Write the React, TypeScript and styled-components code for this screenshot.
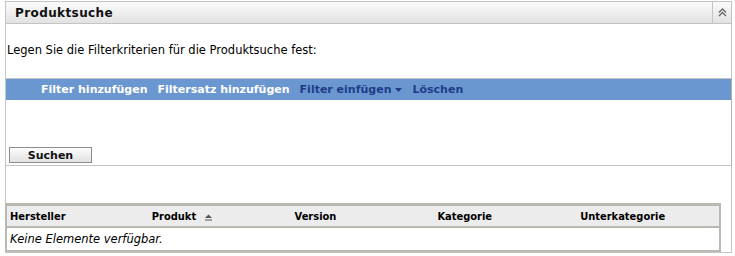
import React from 'react'
import styled, { createGlobalStyle } from 'styled-components'

const GlobalStyle = createGlobalStyle`
  html, body {
    margin: 0;
    padding: 0;
    background: #fff;
  }
  body {
    font-family: 'DejaVu Sans', 'Liberation Sans', sans-serif;
    font-size: 11px;
    color: #000;
  }
`

const Section = styled.div`
  box-sizing: border-box;
  width: 727px;
  margin: 1px 0 0 5px;
  border: 1px solid #c4c4c4;
  border-top: none;
`

const SectionHeader = styled.div`
  box-sizing: border-box;
  display: flex;
  align-items: stretch;
  height: 23px;
  margin: 0 -1px;
  border: 1px solid #c4c4c4;
  background: linear-gradient(#fbfbfb, #e2e2e2);
`

const SectionTitle = styled.div`
  flex: 1;
  display: flex;
  align-items: center;
  padding-left: 9px;
  font-size: 12px;
  letter-spacing: 0.4px;
  font-weight: bold;
  color: #111;
`

const CollapseButton = styled.div`
  width: 18px;
  display: flex;
  align-items: center;
  justify-content: center;
  border-left: 1px solid #c4c4c4;
`

const Intro = styled.div`
  padding: 19px 0 0 1px;
  height: 35px;
  line-height: 14px;
  font-size: 11.5px;
`

const FilterPanel = styled.div`
  border-top: 1px solid #c4c4c4;
  border-right: 1px solid #b0b0b0;
  border-bottom: 1px solid #c4c4c4;
  margin-right: -1px;
  height: 86px;
  display: flex;
  flex-direction: column;
`

const Toolbar = styled.div`
  height: 21px;
  display: flex;
  align-items: center;
  gap: 10px;
  padding-left: 35px;
  background: #6b97d0;
  font-weight: bold;
  font-size: 11px;
`

const ToolLink = styled.span<{ $dark?: boolean }>`
  color: ${(p) => (p.$dark ? '#1f3c8a' : '#fff')};
  display: inline-flex;
  align-items: center;
  gap: 4px;
`

const SearchButton = styled.button`
  box-sizing: border-box;
  margin: auto 0 2px 3px;
  width: 83px;
  height: 16px;
  padding: 0;
  border: 1px solid #8c8c8c;
  background: linear-gradient(#fcfcfc, #e2e2e2);
  font-family: inherit;
  font-size: 11px;
  font-weight: bold;
  color: #111;
`

const Table = styled.table`
  margin-top: 37px;
  width: 716px;
  margin-left: -1px;
  border-collapse: collapse;
  border: 2px solid #b8bab1;
  border-top-width: 3px;
  table-layout: fixed;
`

const HeadCell = styled.th`
  text-align: left;
  font-family: 'DejaVu Sans Condensed', 'DejaVu Sans', sans-serif;
  font-weight: bold;
  font-size: 11px;
  height: 20px;
  padding: 0 0 0 3px;
  background: #ececec;
  border-bottom: 2px solid #b8bab1;
`

const SortIcon = styled.svg`
  margin-left: 9px;
  vertical-align: -1px;
`

const EmptyCell = styled.td`
  height: 22px;
  padding: 0 0 0 3px;
  font-style: italic;
  font-size: 11.5px;
`

const columns = ['Hersteller', 'Produkt', 'Version', 'Kategorie', 'Unterkategorie']

export default function App() {
  return (
    <>
      <GlobalStyle />
      <Section>
        <SectionHeader>
          <SectionTitle>Produktsuche</SectionTitle>
          <CollapseButton>
            <svg width="9" height="9" viewBox="0 0 9 9">
              <polyline points="1,4.5 4.5,1 8,4.5" fill="none" stroke="#666" strokeWidth="1.3" />
              <polyline points="1,8 4.5,4.5 8,8" fill="none" stroke="#666" strokeWidth="1.3" />
            </svg>
          </CollapseButton>
        </SectionHeader>
        <Intro>Legen Sie die Filterkriterien für die Produktsuche fest:</Intro>
        <FilterPanel>
          <Toolbar>
            <ToolLink>Filter hinzufügen</ToolLink>
            <ToolLink>Filtersatz hinzufügen</ToolLink>
            <ToolLink $dark>
              Filter einfügen
              <svg width="7" height="4" viewBox="0 0 7 4">
                <polygon points="0,0 7,0 3.5,4" fill="#1f3c8a" />
              </svg>
            </ToolLink>
            <ToolLink $dark>Löschen</ToolLink>
          </Toolbar>
          <SearchButton>Suchen</SearchButton>
        </FilterPanel>
        <Table>
          <thead>
            <tr>
              {columns.map((c) => (
                <HeadCell key={c}>
                  {c}
                  {c === 'Produkt' && (
                    <SortIcon width="7" height="7" viewBox="0 0 7 7">
                      <polygon points="0,4 3.5,0.5 7,4" fill="#555" />
                      <rect x="0" y="5.5" width="7" height="1" fill="#555" />
                    </SortIcon>
                  )}
                </HeadCell>
              ))}
            </tr>
          </thead>
          <tbody>
            <tr>
              <EmptyCell colSpan={5}>Keine Elemente verfügbar.</EmptyCell>
            </tr>
          </tbody>
        </Table>
      </Section>
    </>
  )
}
